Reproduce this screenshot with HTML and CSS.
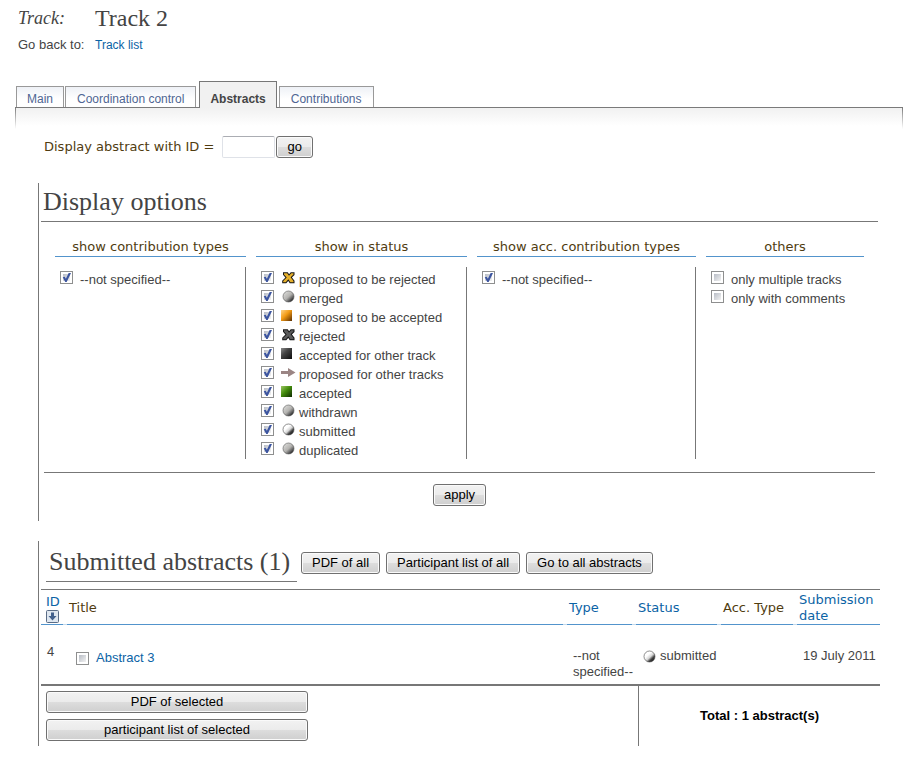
FILE: index.html
```html
<!DOCTYPE html>
<html lang="en">
<head>
<meta charset="utf-8">
<title>Track 2</title>
<link rel="stylesheet" href="styles.css">
</head>
<body>
<svg class="defs" aria-hidden="true">
  <defs>
    <linearGradient id="g-grey" x1="0.15" y1="0.1" x2="0.9" y2="0.9"><stop offset="0" stop-color="#d8d8d6"/><stop offset="0.5" stop-color="#b3b2af"/><stop offset="0.75" stop-color="#666"/><stop offset="1" stop-color="#111"/></linearGradient>
    <linearGradient id="g-white" x1="0.15" y1="0.1" x2="0.9" y2="0.9"><stop offset="0.3" stop-color="#fff"/><stop offset="0.55" stop-color="#d5d5d5"/><stop offset="0.75" stop-color="#444"/><stop offset="1" stop-color="#111"/></linearGradient>
    <linearGradient id="g-orange" x1="0" y1="0" x2="1" y2="1"><stop offset="0" stop-color="#ffd58a"/><stop offset="0.45" stop-color="#f39a14"/><stop offset="1" stop-color="#5a2d00"/></linearGradient>
    <linearGradient id="g-dark" x1="0" y1="0" x2="1" y2="1"><stop offset="0" stop-color="#8b8b8b"/><stop offset="0.4" stop-color="#444"/><stop offset="1" stop-color="#0c0c0c"/></linearGradient>
    <linearGradient id="g-green" x1="0" y1="0" x2="1" y2="1"><stop offset="0" stop-color="#9fc765"/><stop offset="0.45" stop-color="#438c0c"/><stop offset="1" stop-color="#0d2a00"/></linearGradient>
    <symbol id="ball-grey" viewBox="0 0 15 13"><circle cx="7.5" cy="6.5" r="5.5" fill="url(#g-grey)" stroke="#555" stroke-width="0.6"/></symbol>
    <symbol id="ball-white" viewBox="0 0 15 13"><circle cx="7.5" cy="6.5" r="5.5" fill="url(#g-white)" stroke="#444" stroke-width="0.6"/></symbol>
    <symbol id="box-orange" viewBox="0 0 15 13"><path d="M0 1h11v11H0z" fill="url(#g-orange)"/></symbol>
    <symbol id="box-dark" viewBox="0 0 15 13"><path d="M0 1h11v11H0z" fill="url(#g-dark)"/></symbol>
    <symbol id="box-green" viewBox="0 0 15 13"><path d="M0 1h11v11H0z" fill="url(#g-green)"/></symbol>
    <symbol id="cross" viewBox="0 0 15 13"><path d="M3 2.200h3.200L8 4.800 10.200 2.200h2.300v1.300L9.600 6.300l2.900 3.800v1.200H9.300L7.300 8.300 4.800 11.300H2.200v-1.200L5.700 6.600 3 3.500z" fill="#141414" stroke="#141414" stroke-width="2"/><path d="M3 2.200h3.200L8 4.800 10.200 2.200h2.300v1.300L9.600 6.300l2.900 3.800v1.200H9.300L7.300 8.300 4.800 11.300H2.200v-1.200L5.700 6.600 3 3.500z" stroke="none"/></symbol>
    <symbol id="arrow" viewBox="0 0 15 13"><path d="M0 5h7V2l7.500 4.500L7 11V8H0z" fill="#9b8584"/></symbol>
  </defs>
</svg>

<header class="page-head">
  <span class="kind">Track:</span>
  <h1>Track 2</h1>
  <span class="back">Go back to:</span>
  <a class="small" href="#">Track list</a>
</header>

<main class="panel-wrap">
  <nav class="tabs">
    <a href="#">Main</a>
    <a href="#">Coordination control</a>
    <a class="active" href="#" aria-current="page">Abstracts</a>
    <a href="#">Contributions</a>
  </nav>
  <div class="panel">
    <form class="lookup">
      <label for="abs-id">Display abstract with ID =</label>
      <input type="text" id="abs-id">
      <button type="button">go</button>
    </form>

    <section class="block options">
      <h2>Display options</h2>
      <div class="filters">
        <fieldset>
          <legend>show contribution types</legend>
          <div class="choices"><label><input type="checkbox" checked>--not specified--</label></div>
        </fieldset>
        <fieldset>
          <legend>show in status</legend>
          <div class="choices">
            <label><input type="checkbox" checked><svg class="icon gold"><use href="#cross"/></svg>proposed to be rejected</label>
            <label><input type="checkbox" checked><svg class="icon"><use href="#ball-grey"/></svg>merged</label>
            <label><input type="checkbox" checked><svg class="icon"><use href="#box-orange"/></svg>proposed to be accepted</label>
            <label><input type="checkbox" checked><svg class="icon coal"><use href="#cross"/></svg>rejected</label>
            <label><input type="checkbox" checked><svg class="icon"><use href="#box-dark"/></svg>accepted for other track</label>
            <label><input type="checkbox" checked><svg class="icon"><use href="#arrow"/></svg>proposed for other tracks</label>
            <label><input type="checkbox" checked><svg class="icon"><use href="#box-green"/></svg>accepted</label>
            <label><input type="checkbox" checked><svg class="icon"><use href="#ball-grey"/></svg>withdrawn</label>
            <label><input type="checkbox" checked><svg class="icon"><use href="#ball-white"/></svg>submitted</label>
            <label><input type="checkbox" checked><svg class="icon"><use href="#ball-grey"/></svg>duplicated</label>
          </div>
        </fieldset>
        <fieldset>
          <legend>show acc. contribution types</legend>
          <div class="choices"><label><input type="checkbox" checked>--not specified--</label></div>
        </fieldset>
        <fieldset>
          <legend>others</legend>
          <div class="choices">
            <label><input type="checkbox">only multiple tracks</label>
            <label><input type="checkbox">only with comments</label>
          </div>
        </fieldset>
      </div>
      <div class="apply"><button type="button">apply</button></div>
    </section>

    <section class="block results">
      <div class="results-head">
        <h2>Submitted abstracts (1)</h2>
        <button type="button">PDF of all</button>
        <button type="button">Participant list of all</button>
        <button type="button">Go to all abstracts</button>
      </div>
      <table>
        <colgroup><col class="c-id"><col><col class="c-type"><col class="c-status"><col class="c-acc"><col class="c-date"></colgroup>
        <thead>
          <tr>
            <th><a href="#">ID<svg class="sort" viewBox="0 0 13 13"><rect x="0.5" y="0.5" width="12" height="12" rx="1" fill="#dfe7f0" stroke="#5a6c86"/><path d="M5 2.500h3V6h2.500L6.500 10.500 2.500 6H5z" fill="#42608c"/></svg></a></th>
            <th>Title</th>
            <th><a href="#">Type</a></th>
            <th><a href="#">Status</a></th>
            <th>Acc. Type</th>
            <th><a href="#">Submission date</a></th>
          </tr>
        </thead>
        <tbody>
          <tr>
            <td class="num">4</td>
            <td><div class="title-cell"><input type="checkbox" aria-label="Select Abstract 3"><a href="#">Abstract 3</a></div></td>
            <td>--not specified--</td>
            <td><div class="status-cell"><svg class="icon"><use href="#ball-white"/></svg>submitted</div></td>
            <td></td>
            <td class="date">19 July 2011</td>
          </tr>
        </tbody>
      </table>
      <div class="results-foot">
        <div class="actions">
          <button type="button">PDF of selected</button>
          <button type="button">participant list of selected</button>
        </div>
        <div class="total">Total : 1 abstract(s)</div>
      </div>
    </section>
  </div>
</main>
</body>
</html>
```
FILE: styles.css
```css
* { box-sizing: border-box; }

body {
  margin: 0;
  background: #fff;
  color: #444;
  font: 13px/16px "Liberation Sans", Arial, sans-serif;
}

a { color: #0b63a5; text-decoration: none; }
.defs { position: absolute; width: 0; height: 0; }

h1, h2 {
  margin: 0;
  color: #444;
  font-family: "Liberation Serif", "Times New Roman", serif;
  font-weight: normal;
}

.page-head {
  display: grid;
  grid-template-columns: 67px auto;
  justify-content: start;
  align-items: center;
  column-gap: 10px;
  padding: 4px 18px 0;
}
.kind { font: italic 18px/28px "Liberation Serif", "Times New Roman", serif; }
h1 { font-size: 24px; line-height: 28px; }
.back, .small { padding-top: 5px; }
.small { font-size: 12px; }

.panel-wrap { margin: 28px 13px 0 15px; }

.tabs {
  display: flex;
  align-items: flex-end;
  padding-left: 1px;
  gap: 1px;
}
.tabs a {
  height: 21px;
  padding: 4px 11px 0;
  border: 1px solid #999;
  border-bottom: 0;
  background: linear-gradient(#eef1f6, #fff 60%);
  color: #4f6693;
  font-size: 12px;
}
.tabs a:first-child { padding: 4px 10px 0; }
.tabs .active {
  position: relative;
  height: 27px;
  margin: 0 1px -1px 2px;
  padding: 9px 10px 0;
  border-color: #777;
  background: #f1f1f1;
  color: #444;
  font-weight: bold;
}

.panel {
  padding: 28px 22px 0;
  border: solid #777;
  border-width: 1px 1px 0;
  border-image: linear-gradient(#777, #fff 22px) 1;
  background: linear-gradient(#f1f1f1, #fff 18px);
}

.lookup {
  display: flex;
  align-items: center;
  padding-left: 6px;
  color: #503c10;
  font: 13px/22px "DejaVu Sans", Verdana, sans-serif;
}
.lookup input {
  width: 53px;
  height: 22px;
  margin: 0 1px 0 8px;
  border: 1px solid #dfe2e8;
  border-top-color: #abadb3;
  border-radius: 2px;
}

button {
  height: 22px;
  padding: 0 10px;
  border: 1px solid #707070;
  border-radius: 3px;
  background: linear-gradient(#f2f2f2, #ebebeb 50%, #dddddd 50%, #cfcfcf);
  box-shadow: inset 0 0 0 1px #fafafa;
  color: #000;
  font: 13px/20px "Liberation Sans", Arial, sans-serif;
}

input[type="checkbox"] {
  flex: none;
  appearance: none;
  display: grid;
  width: 13px;
  height: 13px;
  margin: 0;
  border: 1px solid #8e8f8f;
  background: linear-gradient(135deg, #b8bdc6, #f2f2f2) content-box #f4f4f4;
  padding: 2px;
}
input[type="checkbox"]:checked::after {
  content: "";
  width: 9px;
  height: 9px;
  margin: -1px;
  background: #3c55a0;
  clip-path: polygon(8% 48%, 30% 42%, 43% 63%, 74% 0, 100% 0, 52% 100%, 36% 100%);
}

.block {
  padding-left: 2px;
  border-left: 1px solid #777;
}
.block h2 { font-size: 26px; line-height: 38px; }

.options { margin-top: 25px; padding-right: 2px; }
.options h2 {
  padding-left: 2px;
  border-bottom: 1px solid #777;
}
.filters {
  display: grid;
  grid-template-columns: 191fr 211fr 219fr 158fr;
  column-gap: 10px;
  margin: 0 3px;
  padding: 16px 11px 13px;
  border-bottom: 1px solid #777;
}
fieldset {
  display: flex;
  flex-direction: column;
  min-width: 0;
  margin: 0;
  padding: 0;
  border: 0;
}
legend {
  width: 100%;
  padding: 0;
  margin-bottom: 10px;
  border-bottom: 1px solid #5294cc;
  color: #503c10;
  font: 13px/18px "DejaVu Sans", Verdana, sans-serif;
  text-align: center;
}
.choices {
  height: 192px;
  padding: 2px 0 0 5px;
  border-right: 1px solid #777;
}
fieldset:last-child .choices { border-right: 0; }
.choices label {
  display: flex;
  align-items: flex-start;
  height: 19px;
  padding-top: 2px;
  line-height: 18px;
}
.choices input { margin-right: 7px; }
.icon {
  flex: none;
  width: 15px;
  height: 13px;
  margin-right: 3px;
}
.gold { fill: #e5b02c; }
.coal { fill: #5a5a5a; }

.apply {
  display: flex;
  justify-content: center;
  padding: 11px 0 15px;
}

.results { margin-top: 20px; }
.results-head {
  display: flex;
  align-items: center;
  gap: 6px;
  padding: 2px 5px 7px;
}
.results-head h2 {
  min-width: 251px;
  margin-right: -2px;
  padding: 0 3px;
  border-bottom: 1px solid #777;
}

table {
  width: 100%;
  table-layout: fixed;
  border-collapse: collapse;
  border-top: 1px solid #777;
  border-bottom: 2px solid #777;
}
.c-id { width: 26px; }
.c-type { width: 69px; }
.c-status { width: 85px; }
.c-acc { width: 76px; }
.c-date { width: 83px; }
th {
  height: 34px;
  padding: 2px 0 1px 2px;
  background: linear-gradient(to right, #5294cc calc(100% - 4px), #c5dbee 0) bottom / 100% 1px no-repeat;
  color: #503c10;
  font: 13px/16px "DejaVu Sans", Verdana, sans-serif;
  text-align: left;
  white-space: nowrap;
}
th:first-child { padding-left: 5px; }
th:last-child {
  background-image: linear-gradient(#5294cc, #5294cc);
  white-space: normal;
}
.sort { display: block; width: 13px; height: 13px; }
td {
  height: 60px;
  padding: 23px 0 4px 6px;
  vertical-align: top;
}
td.num { padding-top: 19px; }
td.date { padding-right: 5px; text-align: right; white-space: nowrap; }
.title-cell, .status-cell { display: flex; align-items: center; }
.title-cell { gap: 7px; padding: 2px 3px 0; }
.status-cell { white-space: nowrap; }

.results-foot {
  display: grid;
  grid-template-columns: 597fr 242fr;
}
.actions {
  display: grid;
  grid-template-columns: 262px;
  gap: 6px;
  padding: 5px;
}
.total {
  display: grid;
  place-items: center;
  border-left: 1px solid #777;
  color: #000;
  font-weight: bold;
}
```
